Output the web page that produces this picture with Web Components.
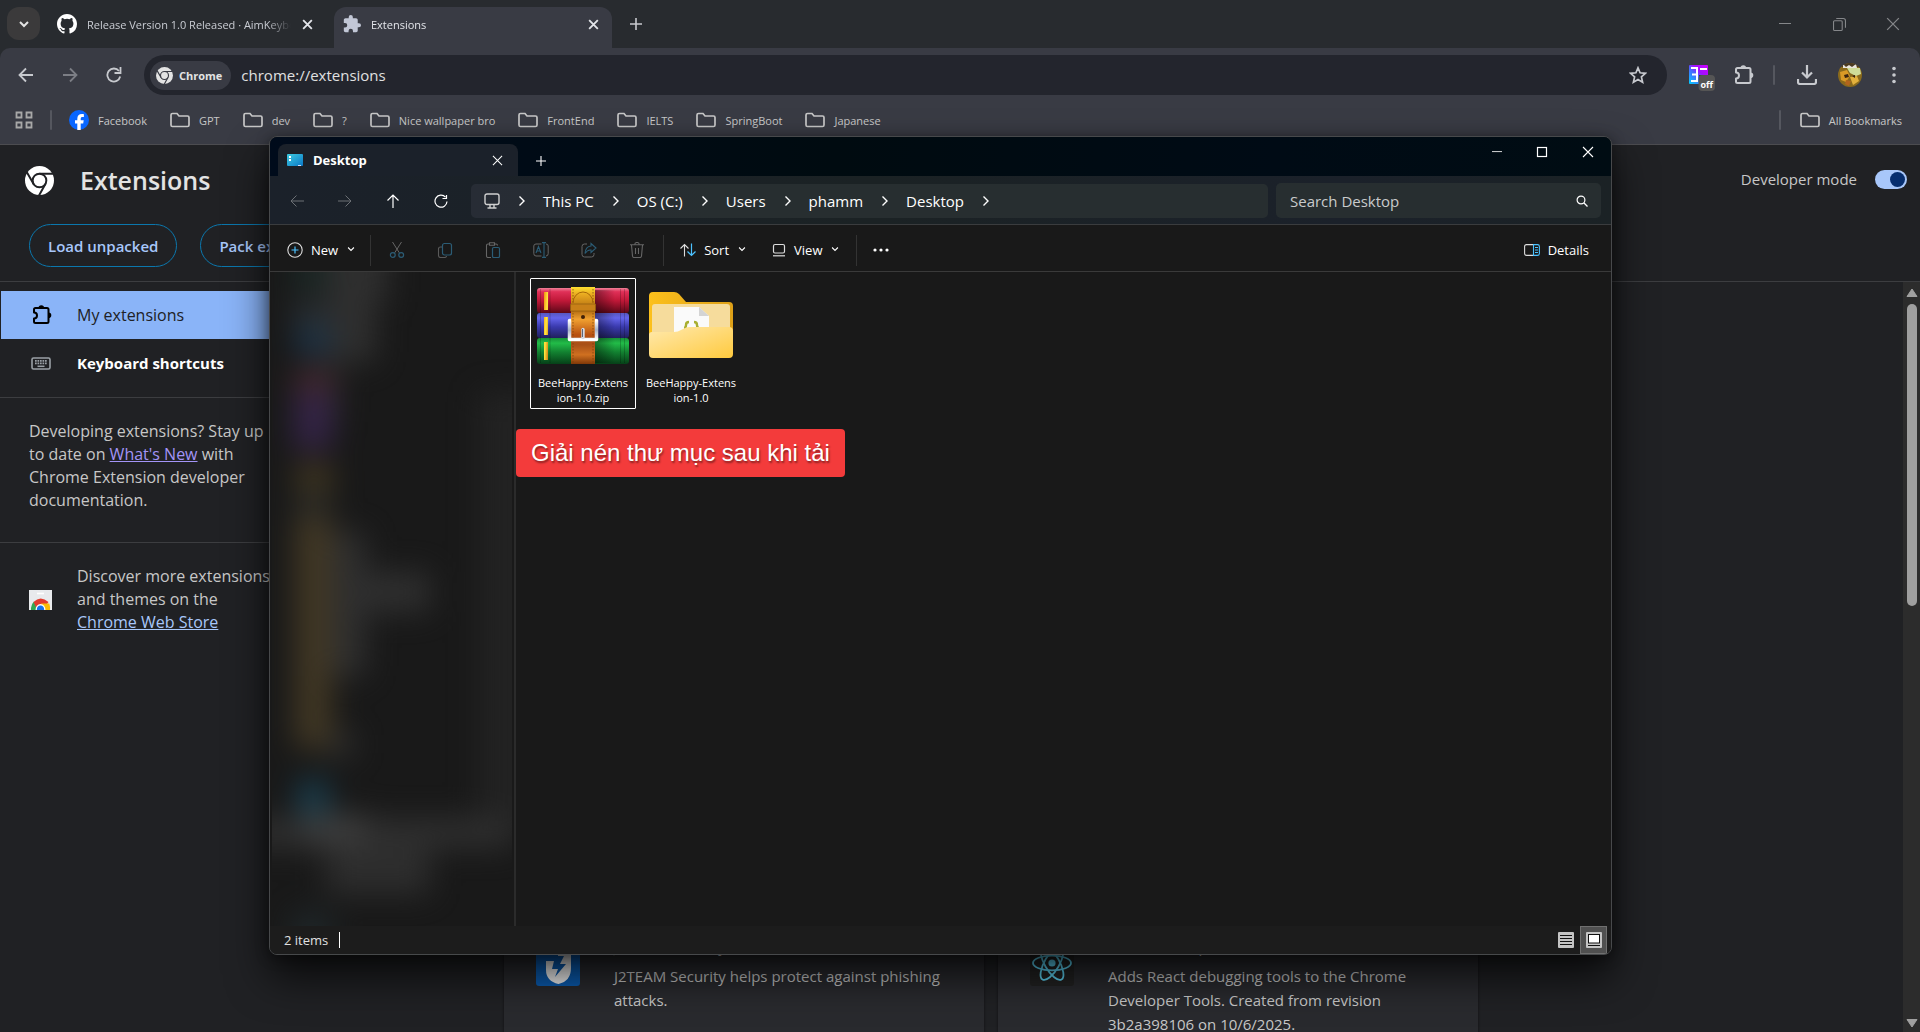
<!DOCTYPE html>
<html lang="en">
<head>
<meta charset="utf-8">
<title>Extensions</title>
<style>
html, body { margin: 0; height: 100%; overflow: hidden; background: #202124; }
body { font-family: "Open Sans", "Noto Sans", sans-serif; font-size: 15px; color: #c7c7c7; }
</style>
</head>
<body>
<desktop-screen></desktop-screen>

<script>
const ICONS = {
  chev: ['0 0 12 12', '<path d="M2 4l4 4 4-4" fill="none" stroke="currentColor" stroke-width="2"/>'],
  chevThin: ['0 0 12 12', '<path d="M2.500 3L6 6.500l3.500-3.500" fill="none" stroke="currentColor" stroke-width="1.300"/>'],
  chevRight: ['0 0 12 12', '<path d="M3.500 1.500L8 6l-4.500 4.500" fill="none" stroke="currentColor" stroke-width="1.400"/>'],
  github: ['0 0 16 16', '<path fill="#fff" d="M8 0C3.580 0 0 3.580 0 8c0 3.540 2.290 6.530 5.470 7.590.4.070.550-.170.550-.380 0-.190-.010-.820-.010-1.490-2.010.370-2.530-.490-2.690-.940-.090-.230-.480-.940-.820-1.130-.280-.150-.680-.520-.010-.530.630-.010 1.080.580 1.230.820.720 1.210 1.870.870 2.330.660.070-.520.280-.870.510-1.070-1.780-.2-3.640-.890-3.640-3.950 0-.870.310-1.590.820-2.150-.080-.2-.360-1.020.080-2.120 0 0 .670-.210 2.200.820a7.600 7.600 0 014 0c1.530-1.040 2.200-.820 2.200-.820.440 1.100.160 1.920.080 2.120.510.560.820 1.270.820 2.150 0 3.070-1.870 3.750-3.650 3.950.290.250.540.730.540 1.480 0 1.070-.010 1.930-.010 2.200 0 .210.150.460.550.380A8.010 8.010 0 0016 8c0-4.420-3.580-8-8-8z"/>'],
  puzzleFill: ['1 1 22 22', '<path fill="currentColor" d="M20.500 11H19V7c0-1.100-.9-2-2-2h-4V3.500a2.500 2.500 0 00-5 0V5H4c-1.100 0-2 .9-2 2v3.800h1.500a2.700 2.700 0 010 5.400H2V20c0 1.100.9 2 2 2h3.800v-1.500a2.700 2.700 0 015.400 0V22H17c1.100 0 2-.9 2-2v-4h1.500a2.500 2.500 0 000-5z"/>'],
  puzzle: ['0 0 22 22', '<path d="M3 5.500Q3 4 4.500 4H16Q17.500 4 17.500 5.500V17.500Q17.500 19 16 19H4.500Q3 19 3 17.500V14.500A3 3 0 003 8.500Z" fill="none" stroke="currentColor" stroke-width="2" stroke-linejoin="round"/><path d="M7.500 4a2.800 2.800 0 015.600 0zM17.500 8.500a2.800 2.800 0 010 5.600z" fill="currentColor"/>'],
  close: ['0 0 12 12', '<path d="M2 2l8 8M10 2l-8 8" stroke="currentColor" stroke-width="1.700"/>'],
  closeThin: ['0 0 12 12', '<path d="M1 1l10 10M11 1L1 11" stroke="currentColor" stroke-width="1.100"/>'],
  plus: ['0 0 12 12', '<path d="M6 0v12M0 6h12" stroke="currentColor" stroke-width="1.600"/>'],
  plusThin: ['0 0 12 12', '<path d="M6 1v10M1 6h10" stroke="currentColor" stroke-width="1.100"/>'],
  min: ['0 0 12 12', '<path d="M0 5.500h12" stroke="currentColor"/>'],
  max: ['0 0 12 12', '<rect x="1.500" y="1.500" width="9" height="9" fill="none" stroke="currentColor" stroke-width="1.200"/>'],
  restore: ['0 0 12 12', '<path d="M.5 3.500a1 1 0 011-1h6a1 1 0 011 1v7a1 1 0 01-1 1h-6a1 1 0 01-1-1zM3 .5h6.500a2 2 0 012 2V9" fill="none" stroke="currentColor"/>'],
  back: ['0 0 16 16', '<path d="M15 8H2M8 1.500L1.500 8 8 14.500" fill="none" stroke="currentColor" stroke-width="1.800"/>'],
  fwd: ['0 0 16 16', '<path d="M1 8h13M8 1.500L14.500 8 8 14.500" fill="none" stroke="currentColor" stroke-width="1.800"/>'],
  reload: ['0 0 16 16', '<path d="M14.200 9.500A6.500 6.500 0 1113 4" fill="none" stroke="currentColor" stroke-width="1.800"/><path d="M14.500 0v6h-6" fill="none" stroke="currentColor" stroke-width="1.800"/>'],
  backThin: ['0 0 14 14', '<path d="M14 7H1M6.500 1.500L1 7l5.500 5.500" fill="none" stroke="currentColor"/>'],
  fwdThin: ['0 0 14 14', '<path d="M0 7h13M7.500 1.500L13 7l-5.500 5.500" fill="none" stroke="currentColor"/>'],
  upThin: ['0 0 14 14', '<path d="M7 14V1M1.500 6.500L7 1l5.500 5.500" fill="none" stroke="currentColor" stroke-width="1.200"/>'],
  reloadThin: ['0 0 14 14', '<path d="M13 7.500A6 6 0 1111.500 3.200M12.500 1v3.500H8.500" fill="none" stroke="currentColor" stroke-width="1.200"/>'],
  chrome: ['0 0 28 28', '<circle cx="14" cy="14" r="14" fill="currentColor"/><g fill="none" stroke="var(--hole,#202124)" stroke-width="1.900"><circle cx="14" cy="14" r="6.600"/><path d="M14 7.400H27M19.700 17.300L13.500 28.500M8.300 17.300L1.800 6"/></g>'],
  star: ['0 0 18 18', '<path d="M9 1.800l2.100 5 5.400.5-4.100 3.600 1.200 5.300L9 13.400l-4.600 2.800 1.200-5.300-4.100-3.600 5.400-.5z" fill="none" stroke="currentColor" stroke-width="1.700"/>'],
  download: ['0 0 20 20', '<path d="M10 0v12M5 7.500l5 5 5-5M1 14v3q0 2 2 2h14q2 0 2-2v-3" fill="none" stroke="currentColor" stroke-width="2.200"/>'],
  dots: ['0 0 6 18', '<g fill="currentColor"><circle cx="3" cy="2.500" r="1.800"/><circle cx="3" cy="9" r="1.800"/><circle cx="3" cy="15.500" r="1.800"/></g>'],
  apps: ['0 0 18 18', '<g fill="none" stroke="currentColor" stroke-width="1.800"><path d="M1.500 1.500h5v5h-5zM11.500 1.500h5v5h-5zM1.500 11.500h5v5h-5zM11.500 11.500h5v5h-5z"/></g>'],
  folder: ['0 0 20 16', '<path d="M1 3q0-1.500 1.500-1.500H7L9 4h8.500Q19 4 19 5.500v7.500q0 1.500-1.500 1.500h-15Q1 14.500 1 13z" fill="none" stroke="currentColor" stroke-width="1.700"/>'],
  facebook: ['0 0 20 20', '<circle cx="10" cy="10" r="10" fill="#0866ff"/><path d="M8.300 20v-6.600H6V10.300h2.300V9c0-3.300 1.500-4.900 4.700-4.900.6 0 1.500.1 1.900.2v2.800h-1.300c-1.400 0-1.900.6-1.900 2v1.200h3l-.5 3.100h-2.500V20z" fill="#fff"/>'],
  flow: ['0 0 26 27', '<defs><linearGradient id="g" x1="0" y1="1" x2="1" y2="0"><stop offset="0" stop-color="#00d0ff"/><stop offset=".45" stop-color="#4f62ff"/><stop offset=".6" stop-color="#a010ff"/><stop offset="1" stop-color="#d000ff"/></linearGradient></defs><path d="M0 1q0-1 1-1h17q1 0 1 1v9h-9v9H1q-1 0-1-1z" fill="url(#g)"/><path d="M2 3h6v13H2M3 9.500h5M11 4h7" stroke="#fff" stroke-width="2" fill="none"/><rect x="9.500" y="10" width="16.500" height="16" rx="4" fill="#555"/>'],
  avatar: ['0 0 24 24', '<defs><clipPath id="c"><circle cx="12" cy="12" r="12"/></clipPath></defs><g clip-path="url(#c)"><path fill="#8a6a1c" d="M0 0h24v24H0z"/><path fill="#4a3a22" d="M3 0h18v4H3z"/><path fill="#e8e4dc" d="M5 1l3 3 3-2 3 2 4-3 1 4H5z"/><path fill="#cfdc98" d="M9 5h13l1 6-5 2-6-3z"/><path fill="#d99a26" d="M2 9l7-2 3 6-4 6-5-2z"/><path fill="#e2b03c" d="M12 14l7-1 2 5-6 4z"/><path fill="#3a2410" d="M6 12l4-1 1 3-4 1zM14 13l3-1v3z"/><path fill="#b3641c" d="M8 17l5 1-2 5-4-2z"/></g>'],
  keyboard: ['0 0 20 13', '<rect x="1" y="1" width="18" height="11" rx="1.500" fill="none" stroke="#9aa0a6" stroke-width="1.600"/><path d="M4 3.800h12M4 6.300h12" stroke="#9aa0a6" stroke-width="1.700" stroke-dasharray="1.700 .8"/><path d="M6.500 9.300h7" stroke="#9aa0a6" stroke-width="1.500"/>'],
  store: ['0 0 23 20', '<path fill="#e8eaed" d="M0 0h23v20H0z"/><path d="M8 3.500h7" stroke="#fff" stroke-width="1.600"/><path d="M2 20a9.500 11 0 013-8.500l4 8.500z" fill="#34a853"/><path d="M4.500 12q7-7 15 0l-3 4H9l-1 3z" fill="#e33b2e"/><path d="M12 13.500h8.300q1 3 .7 6.500h-6z" fill="#fbbc04"/><path d="M6.500 20a5 6 0 0110 0z" fill="#fff"/><path d="M7.800 20a3.700 4.500 0 017.400 0z" fill="#1a73e8"/>'],
  desktop: ['0 0 16 13', '<defs><linearGradient id="d" x1="0" y1="0" x2="1" y2="1"><stop offset="0" stop-color="#3ecbe0"/><stop offset="1" stop-color="#0a78c8"/></linearGradient></defs><rect width="16" height="12" rx="1" fill="url(#d)"/><path d="M2 2h2v2H2zM2 5h2v2H2z" fill="#fff"/><path d="M11 11.500h3" stroke="#cdf" stroke-width="1"/>'],
  monitor: ['0 0 16 16', '<rect x="1" y="1" width="14" height="10.500" rx="2" fill="none" stroke="currentColor" stroke-width="1.400"/><path d="M6 12v2.500M10 12v2.500M3.500 15h9" stroke="currentColor" stroke-width="1.400"/>'],
  search: ['0 0 12 12', '<circle cx="5" cy="5" r="3.900" fill="none" stroke="currentColor" stroke-width="1.200"/><path d="M7.800 7.800L11.500 11.500" stroke="currentColor" stroke-width="1.300"/>'],
  add: ['0 0 16 16', '<circle cx="8" cy="8" r="7.200" fill="none" stroke="#ddd" stroke-width="1.100"/><path d="M8 4.500v7M4.500 8h7" stroke="#4cc2ff" stroke-width="1.200"/>'],
  cut: ['0 0 16 16', '<path d="M3.500 0l6.800 10.800M12.500 0L5.700 10.800" stroke="#666" fill="none"/><g fill="none" stroke="#2b5c75" stroke-width="1.200"><circle cx="3.800" cy="13" r="2.400"/><circle cx="12.200" cy="13" r="2.400"/></g>'],
  copy: ['0 0 16 16', '<path d="M5 5H3.500Q1.500 5 1.500 7v6.500q0 2 2 2h4q2 0 2-1.500" fill="none" stroke="#5a5a5a" stroke-width="1.100"/><rect x="5.500" y="1.500" width="9" height="11.500" rx="2" fill="none" stroke="#2b5c75" stroke-width="1.200"/>'],
  paste: ['0 0 16 16', '<path d="M4.500 2H3Q1.500 2 1.500 3.500v10.500q0 1.500 1.500 1.500h3M9.500 2H11q1.500 0 1.500 1.500M4.500.8h5v2.400h-5z" fill="none" stroke="#666" stroke-width="1.100"/><rect x="7.500" y="5.500" width="7" height="10" rx="1.300" fill="none" stroke="#2b5c75" stroke-width="1.200"/>'],
  rename: ['0 0 16 16', '<path d="M8.500 2H3Q.8 2 .8 4v7.500Q.8 14 3 14h5.500M13 2q2.200 0 2.200 2v7.500q0 2.500-2.200 2.500" fill="none" stroke="#666"/><path d="M3 11l2.500-6.500L8 11M4 9h3M9 .6h4M11 .6v14.800M9 15.400h4" fill="none" stroke="#2b5c75" stroke-width="1.100"/>'],
  share: ['0 0 16 16', '<path d="M6 2H3.500Q1 2 1 4.500v8Q1 15 3.500 15h7q2.500 0 2.500-2.500V11" fill="none" stroke="#666"/><path d="M10 1.500l5 4.500-5 4.500V8Q6.500 7.500 4 11.500 4.500 4.500 10 4z" fill="none" stroke="#2b5c75" stroke-width="1.100"/>'],
  trash: ['0 0 16 16', '<path d="M1 2.800h14M5.800 2.500q0-2 2.200-2t2.200 2M2.500 3l1 11q.1 1.500 1.500 1.500h6q1.400 0 1.500-1.500l1-11M6.500 6v6M9.500 6v6" fill="none" stroke="#666" stroke-width="1.100"/>'],
  sort: ['0 0 16 14', '<path d="M4.500 13.500V1.500M.5 5.500l4-4 4 4" fill="none" stroke="#ddd" stroke-width="1.100"/><path d="M11.500.5v12M7.500 8.500l4 4 4-4" fill="none" stroke="#4cc2ff" stroke-width="1.200"/>'],
  view: ['0 0 14 14', '<rect x="1.500" y="1.500" width="11" height="8.500" rx="1.500" fill="none" stroke="#ddd" stroke-width="1.200"/><path d="M1 12.800h12" stroke="#ddd" stroke-width="1.200"/>'],
  more: ['0 0 16 4', '<g fill="#fff"><circle cx="2" cy="2" r="1.600"/><circle cx="8" cy="2" r="1.600"/><circle cx="14" cy="2" r="1.600"/></g>'],
  details: ['0 0 16 12', '<path d="M9.500.6H2.500Q.6.6.6 2.500v7q0 1.900 1.900 1.900h7" fill="none" stroke="#ddd" stroke-width="1.100"/><path d="M9.500.6h4q1.900 0 1.900 1.900v7q0 1.900-1.900 1.900h-4zM11 3.500h3M11 6h3M11 8.500h3" fill="none" stroke="#4cc2ff" stroke-width="1.100"/>'],
  list: ['0 0 16 16', '<rect width="16" height="16" rx="1" fill="#c4c4c4"/><path d="M2 3.500h12M2 6.500h12M2 9.500h12M2 12.500h12" stroke="#111"/>'],
  tiles: ['0 0 16 16', '<rect width="16" height="16" rx="1" fill="#c4c4c4"/><rect x="2.500" y="2.500" width="11" height="8.500" fill="#fff" stroke="#111"/><path d="M2 13.500h12" stroke="#111"/>'],
  shield: ['0 0 44 44', '<rect width="44" height="44" rx="3" fill="#0b5cb0"/><path d="M22 4h13v22q0 13-12.500 16Q10 39 10 28V19h8l-2 8h6l-3 8 11-13h-6l4-8h-6z" fill="#f2f2f2"/>'],
  react: ['0 0 44 44', '<rect width="44" height="44" rx="3" fill="#222"/><g fill="none" stroke="#61dafb" stroke-width="1.800"><ellipse cx="22" cy="21" rx="19" ry="7.400"/><ellipse cx="22" cy="21" rx="19" ry="7.400" transform="rotate(60 22 21)"/><ellipse cx="22" cy="21" rx="19" ry="7.400" transform="rotate(120 22 21)"/></g><circle cx="22" cy="21" r="3.600" fill="#61dafb"/>'],
  up: ['0 0 12 10', '<path d="M6 1L11 8.500H1z" fill="#a0a0a0" stroke="#a0a0a0" stroke-linejoin="round"/>'],
  down: ['0 0 12 10', '<path d="M6 9L1 1.500h10z" fill="#a0a0a0" stroke="#a0a0a0" stroke-linejoin="round"/>'],
  winrar: ['0 0 92 80', `<defs>
    <linearGradient id="r" x2="0" y2="1"><stop offset="0" stop-color="#f08098"/><stop offset=".15" stop-color="#e03058"/><stop offset=".5" stop-color="#c01838"/><stop offset="1" stop-color="#5c0818"/></linearGradient>
    <linearGradient id="b" x2="0" y2="1"><stop offset="0" stop-color="#5858c0"/><stop offset=".2" stop-color="#6464ec"/><stop offset=".55" stop-color="#3a3aae"/><stop offset="1" stop-color="#20205c"/></linearGradient>
    <linearGradient id="n" x2="0" y2="1"><stop offset="0" stop-color="#189038"/><stop offset=".2" stop-color="#22bc48"/><stop offset=".55" stop-color="#128030"/><stop offset="1" stop-color="#064018"/></linearGradient>
    <linearGradient id="s" x2="0" y2="1"><stop offset="0" stop-color="#ffe030"/><stop offset=".1" stop-color="#e8a820"/><stop offset=".3" stop-color="#b06a10"/><stop offset=".42" stop-color="#f0a030"/><stop offset=".62" stop-color="#b85010"/><stop offset=".75" stop-color="#a85018"/><stop offset=".88" stop-color="#d07020"/><stop offset="1" stop-color="#803808"/></linearGradient>
    <linearGradient id="y" x2="1" y2="1"><stop offset="0" stop-color="#f09010"/><stop offset=".5" stop-color="#ffe840"/><stop offset="1" stop-color="#d07810"/></linearGradient>
    <linearGradient id="h"><stop offset="0" stop-color="#000" stop-opacity=".4"/><stop offset="1" stop-color="#000" stop-opacity="0"/></linearGradient>
    <linearGradient id="m" x2="0" y2="1"><stop offset="0" stop-color="#fff"/><stop offset=".5" stop-color="#a8b4c8"/><stop offset="1" stop-color="#fff"/></linearGradient></defs>
    <rect y="2" width="92" height="25" rx="3" fill="url(#r)"/><rect y="27" width="92" height="25" rx="3" fill="url(#b)"/><rect y="52" width="92" height="26" rx="3" fill="url(#n)"/>
    <path d="M3.500 3v74M13 3v74M83.500 3v74M87.500 3v74" stroke="#000" stroke-opacity=".2"/><path d="M58 4h20v73H58z" fill="url(#h)"/>
    <path d="M7 6h4v18H7zM7 31h4v18H7zM7 56h4v18H7z" fill="url(#y)"/>
    <path d="M34 1h24v77H34z" fill="url(#s)"/><path d="M36 3v74M56 3v74" stroke="#704008" stroke-dasharray="1.500 1.500" fill="none" opacity=".7"/>
    <path d="M36 17a10 11 0 0120 0" fill="none" stroke="#a86808"/><path d="M33.500 18h25v7h-25z" fill="#c88018" stroke="#946010" stroke-width=".8"/><circle cx="46" cy="31" r="2" fill="#402008"/>
    <path d="M34 34.500h-1.500v19h27V34.500H58" fill="none" stroke="url(#m)" stroke-width="3.500" stroke-linejoin="round"/><path d="M46 43.500v8" stroke="#d4dae4" stroke-width="3.400" stroke-linecap="round"/><path d="M45.500 43v8" stroke="#50586a" stroke-width=".9"/>`],
  projectFolder: ['0 0 92 80', `<defs>
    <linearGradient id="f" x2="1" y2="1"><stop offset="0" stop-color="#ffe9ae"/><stop offset="1" stop-color="#ffca3e"/></linearGradient>
    <linearGradient id="k" x2="1"><stop offset="0" stop-color="#fcc01c"/><stop offset="1" stop-color="#dda018"/></linearGradient></defs>
    <path d="M4 10q0-4 4-4h21q3 0 5 2l7 8h43q4 0 4 4v48H4z" fill="url(#k)"/><path d="M7 21q0-3 3-3h72q3 0 3 3v28H7z" fill="#f6dc9c"/>
    <path d="M29 21h25l10 9v22H29z" fill="#fafafa"/><path d="M54 21v9h10z" fill="#d4d4d4"/>
    <path d="M44 36q-3 0-3 3t-2 3q2 0 2 3M49 36q3 0 3 3t2 3q-2 0-2 3" fill="none" stroke="#a8ae30" stroke-width="2.400"/>
    <path d="M4 49q0-3 3-3h22q4 0 7-2l4-2q2-1 5-1h39q4 0 4 4v23q0 4-4 4H8q-4 0-4-4z" fill="url(#f)"/>`]
};

/* Registers an element whose shadow root is cloned from a template. */
function define(name, css, html) {
  const template = document.createElement('template');
  template.innerHTML = `<style>*{box-sizing:border-box}button,input{font:inherit;color:inherit;background:none;border:0;padding:0;margin:0;outline:0}button{display:inline-flex;align-items:center;justify-content:center;white-space:nowrap}a{color:inherit;text-decoration:none}${css}</style>${html}`;
  customElements.define(name, class extends HTMLElement {
    constructor() {
      super();
      this.attachShadow({ mode: 'open' }).append(template.content.cloneNode(true));
    }
  });
}

customElements.define('ui-icon', class extends HTMLElement {
  connectedCallback() {
    if (this.shadowRoot) return;
    const [box, body] = ICONS[this.getAttribute('name')];
    const [, , w, h] = box.split(' ').map(Number);
    const width = Number(this.getAttribute('w') || w);
    const height = Math.round(width * h / w);
    this.attachShadow({ mode: 'open' }).innerHTML =
      `<style>:host{display:inline-flex;flex:none}svg{display:block}</style><svg aria-hidden="true" width="${width}" height="${height}" viewBox="${box}">${body}</svg>`;
  }
});

define('browser-tab', `
  :host { display: flex; align-items: center; width: 278px; height: 41px; padding: 0 13px 7px 9px; gap: 10px; font-size: 11px; color: #c9ccd3; }
  :host([active]) { background: #393b44; border-radius: 12px 12px 0 0; color: #e3e5ea; }
  .title { flex: 1; min-width: 0; overflow: hidden; white-space: nowrap; -webkit-mask-image: linear-gradient(90deg, #000 calc(100% - 24px), transparent); text-align: left; }
  button { width: 12px; height: 20px; color: #e3e5ea; }
`, `<slot name="icon"></slot><span class="title"><slot></slot></span><button aria-label="Close tab"><ui-icon name="close" w="13"></ui-icon></button>`);

define('bookmark-link', `
  :host { display: block; font-size: 11px; color: #c7c7c7; }
  a { display: flex; align-items: center; gap: 9px; white-space: nowrap; }
`, `<a href="#"><slot name="icon"><ui-icon name="folder"></ui-icon></slot><slot></slot></a>`);

define('bar-rule', `:host { display: block; width: 2px; height: 20px; background: #55575f; border-radius: 1px; }`, ``);

define('browser-chrome', `
  :host { display: block; background: #282b2f; }
  .tabs { display: flex; height: 48px; padding: 7px 0 0 7px; }
  .tabs browser-tab[active] { margin-left: 8px; }
  .menu { width: 33px; height: 33px; border-radius: 12px; background: #3b3a3b; color: #e3e3e3; margin-right: 8px; }
  .new { width: 48px; height: 34px; color: #c7c9ce; }
  .win { margin-left: auto; display: flex; color: #85878a; }
  .win button { width: 54px; height: 34px; }
  .panel { background: #393b44; border-radius: 10px 10px 0 0; border-bottom: 1px solid #4c4c50; height: 97px; padding-top: 7px; }
  .bar { display: flex; align-items: center; height: 40px; color: #c7c9ce; padding-right: 23px; }
  .nav { display: flex; padding-left: 4px; width: 144px; }
  .nav button { width: 44px; height: 40px; }
  .dim { color: #7c7e85; }
  .omni { flex: 1; display: flex; align-items: center; height: 40px; border-radius: 20px; background: #23252d; padding: 0 20px 0 6px; }
  .chip { height: 29px; border-radius: 15px; background: #393b44; padding: 0 9px 0 6px; gap: 6px; font-size: 11px; font-weight: 700; color: #e3e3e3; --hole: #393b44; }
  .omni input { flex: 1; font-size: 15px; color: #e0e0e0; padding-left: 10px; height: 30px; }
  .tools { display: flex; align-items: center; padding-left: 22px; }
  .flow { display: grid; margin-right: 18px; padding-top: 6px; }
  .flow > * { grid-area: 1 / 1; }
  .flow span { align-self: end; justify-self: end; font: 700 9px/14px "Open Sans", sans-serif; color: #fff; padding-right: 2px; }
  .marks { display: flex; align-items: center; height: 50px; padding: 0 18px 0 15px; gap: 23px; }
  .marks bar-rule { margin: 0 -6px; }
  .all { margin-left: auto; display: flex; align-items: center; gap: 19px; }
`, `
  <div class="tabs">
    <button class="menu" aria-label="Search tabs"><ui-icon name="chev"></ui-icon></button>
    <browser-tab><ui-icon slot="icon" name="github" w="20"></ui-icon>Release Version 1.0 Released · AimKeyboard</browser-tab>
    <browser-tab active><ui-icon slot="icon" name="puzzleFill" w="18" style="color:#c2c7d6"></ui-icon>Extensions</browser-tab>
    <button class="new" aria-label="New tab"><ui-icon name="plus"></ui-icon></button>
    <div class="win"><button aria-label="Minimize"><ui-icon name="min"></ui-icon></button><button aria-label="Restore"><ui-icon name="restore" w="13"></ui-icon></button><button aria-label="Close"><ui-icon name="closeThin" w="14"></ui-icon></button></div>
  </div>
  <div class="panel">
    <div class="bar">
      <div class="nav"><button aria-label="Back"><ui-icon name="back"></ui-icon></button><button class="dim" aria-label="Forward"><ui-icon name="fwd"></ui-icon></button><button aria-label="Reload"><ui-icon name="reload"></ui-icon></button></div>
      <div class="omni"><button class="chip"><ui-icon name="chrome" w="17"></ui-icon>Chrome</button><input aria-label="Address" value="chrome://extensions"><button aria-label="Bookmark"><ui-icon name="star"></ui-icon></button></div>
      <div class="tools">
        <button class="flow" aria-label="Extension, off"><ui-icon name="flow"></ui-icon><span>off</span></button>
        <button aria-label="Extensions"><ui-icon name="puzzle"></ui-icon></button>
        <bar-rule style="margin:0 22px 0 18px"></bar-rule>
        <button aria-label="Downloads"><ui-icon name="download"></ui-icon></button>
        <button aria-label="Profile" style="margin:0 29px 0 21px"><ui-icon name="avatar"></ui-icon></button>
        <button aria-label="Menu"><ui-icon name="dots"></ui-icon></button>
      </div>
    </div>
    <div class="marks">
      <ui-icon name="apps" style="color:#a8a8a8"></ui-icon><bar-rule></bar-rule>
      <bookmark-link><ui-icon slot="icon" name="facebook"></ui-icon>Facebook</bookmark-link>
      <bookmark-link>GPT</bookmark-link><bookmark-link>dev</bookmark-link><bookmark-link>?</bookmark-link><bookmark-link>Nice wallpaper bro</bookmark-link><bookmark-link>FrontEnd</bookmark-link><bookmark-link>IELTS</bookmark-link><bookmark-link>SpringBoot</bookmark-link><bookmark-link>Japanese</bookmark-link>
      <div class="all"><bar-rule style="margin:0"></bar-rule><bookmark-link>All Bookmarks</bookmark-link></div>
    </div>
  </div>`);

define('side-item', `
  :host { display: block; height: 48px; font-size: 15px; font-weight: 700; color: #fff; margin-left: 1px; }
  :host([active]) { background: #8ab4f8; color: #202124; font-size: 16px; font-weight: 400; }
  a { display: flex; height: 100%; align-items: center; padding-left: 28px; }
  .i { width: 48px; display: flex; padding-left: 2px; color: #000; }
`, `<a href="#"><span class="i"><slot name="icon"></slot></span><slot></slot></a>`);

define('extension-card', `
  :host { display: flex; gap: 34px; width: 480px; height: 200px; background: #292a2e; border-radius: 8px; padding: 13px 32px; color: #c7c7c7; line-height: 24px; box-shadow: 0 1px 3px #0008; }
  h2 { margin: 0 0 6px; font-size: 15px; line-height: 24px; font-weight: 400; color: #e3e3e3; white-space: nowrap; }
  p { margin: 0; width: 330px; font-size: 15px; }
  .i { padding-top: 8px; }
`, `<div class="i"><slot name="icon"></slot></div><div><h2><slot name="title"></slot></h2><p><slot></slot></p></div>`);

define('extensions-page', `
  :host { flex: 1; min-height: 0; display: flex; flex-direction: column; background: #202124; }
  header { height: 137px; border-bottom: 1px solid #3c3d40; padding: 20px 13px 0 25px; }
  .top { display: flex; align-items: center; height: 30px; color: #fff; }
  h1 { font-size: 25px; line-height: 30px; font-weight: 600; margin: 0 0 0 26px; color: #e3e3e3; }
  label { margin-left: auto; display: flex; align-items: center; gap: 18px; color: #c7c7c7; font-size: 15px; padding-bottom: 2px; }
  input { appearance: none; display: flex; align-items: center; justify-content: flex-end; width: 32px; height: 19px; border-radius: 10px; background: #a8c7fa; padding-right: 2px; }
  input::before { content: ""; width: 15px; height: 15px; border-radius: 50%; background: #062e6f; }
  .acts { display: flex; gap: 23px; padding: 29px 0 0 4px; }
  .acts button { height: 43px; border-radius: 22px; border: 1px solid #0b77ad; color: #a8c7fa; font-weight: 600; padding: 0 18px; }
  .body { flex: 1; min-height: 0; display: flex; }
  aside { width: 300px; padding-top: 9px; font-size: 16px; line-height: 23px; }
  .sec { border-top: 1px solid #3c3d40; }
  .dev { margin-top: 10px; padding: 22px 26px 30px 29px; }
  .dev a { color: #a394f7; text-decoration: underline; }
  .disc { display: flex; align-items: center; padding: 22px 20px 0 29px; gap: 25px; }
  .disc a { display: inline-block; white-space: nowrap; color: #a8c7fa; text-decoration: underline; }
  main { flex: 1; min-width: 0; display: flex; align-items: flex-end; justify-content: center; gap: 14px; margin-bottom: -89px; padding-right: 221px; }
  .scroll { width: 17px; background: #2c2c2c; display: flex; flex-direction: column; align-items: center; padding: 6px 0 4px; gap: 6px; }
  .scroll i { width: 10px; flex: 0 0 302px; border-radius: 5px; background: #9f9f9f; }
  .scroll ui-icon:last-child { margin-top: auto; }
  .clip { flex: 1; display: flex; overflow: hidden; }
`, `
  <header>
    <div class="top"><ui-icon name="chrome" w="29"></ui-icon><h1>Extensions</h1><label for="dev">Developer mode <input id="dev" type="checkbox" checked></label></div>
    <div class="acts"><button>Load unpacked</button><button>Pack extension</button></div>
  </header>
  <div class="body">
    <aside>
      <side-item active><ui-icon slot="icon" name="puzzle"></ui-icon>My extensions</side-item>
      <side-item><ui-icon slot="icon" name="keyboard"></ui-icon>Keyboard shortcuts</side-item>
      <div class="sec dev">Developing extensions? Stay up to date on <a href="#">What's New</a> with Chrome Extension developer documentation.</div>
      <div class="sec disc"><ui-icon name="store"></ui-icon><span>Discover more extensions and themes on the <a href="#">Chrome Web Store</a></span></div>
    </aside>
    <div class="clip"><main>
      <extension-card><ui-icon slot="icon" name="shield"></ui-icon><span slot="title">J2TEAM Security</span>J2TEAM Security helps protect against phishing attacks.</extension-card>
      <extension-card><ui-icon slot="icon" name="react"></ui-icon><span slot="title">React Developer Tools 7.0.1 (10/20/2025)</span>Adds React debugging tools to the Chrome Developer Tools. Created from revision 3b2a398106 on 10/6/2025.</extension-card>
    </main></div>
    <div class="scroll"><ui-icon name="up"></ui-icon><i></i><ui-icon name="down"></ui-icon></div>
  </div>`);

define('file-tile', `
  :host { display: block; width: 106px; }
  button { width: 100%; height: 131px; flex-direction: column; justify-content: flex-start; gap: 9px; padding: 7px 0 0; border: 1px solid transparent; border-radius: 1px; color: #fff; }
  :host([selected]) button { border-color: #fff; }
  span { font-size: 11px; line-height: 15px; text-align: center; }
`, `<button><slot name="icon"></slot><span><slot></slot></span></button>`);

define('blurred-tree', `
  :host { display: block; overflow: hidden; background: #191919; }
  svg { display: block; width: 100%; height: 100%; }
`, `<svg viewBox="0 0 240 654" preserveAspectRatio="xMinYMin slice" aria-hidden="true">
    <defs><filter id="s" filterUnits="userSpaceOnUse" x="-80" y="-80" width="420" height="820" color-interpolation-filters="sRGB"><feGaussianBlur stdDeviation="15"/></filter></defs>
    <rect width="240" height="654" fill="#191919"/>
    <g filter="url(#s)" opacity=".85">
      <path fill="#333" d="M56-60h60v90H104v60H66v60H56zM56 260h38v40h64v40H94v64H56zM56 460h26v24H56z"/>
      <path fill="#242424" d="M206 120h90v440h-90z"/>
      <path fill="#1b2b28" d="M20-20h36v36H20z"/><path fill="#2b3033" d="M20 26h38v28H20z"/><path fill="#1d3850" d="M24 54h34v30H24z"/>
      <path fill="#4c2a2c" d="M22 96h38v22H22z"/><path fill="#3a2650" d="M22 118h38v60H22z"/><path fill="#4a3d20" d="M24 192h36v26H24z"/>
      <path fill="#2a2a28" d="M24 218h36v28H24z"/><path fill="#4a3e26" d="M23 244h36v232H23z"/><path fill="#18465a" d="M26 508h30v34H26z"/>
      <path fill="#333" d="M-60 546h300v30H-60z"/><path fill="#444" d="M30 542h64v30H30z"/><path fill="#313131" d="M54 574h104v48H54z"/><path fill="#20292c" d="M20 640h40v60H20z"/>
    </g></svg>`);

define('file-explorer', `
  :host { display: flex; flex-direction: column; border: 1px solid #47494b; border-radius: 8px; overflow: hidden; background: #191919; color: #fff; box-shadow: 0 22px 42px rgba(0,0,0,.7), 0 2px 14px rgba(0,0,0,.4); }
  .title { display: flex; height: 39px; background: linear-gradient(90deg, #000b1b, #000b10 42%, #000b15 75%, #000c13); padding-left: 8px; }
  .tab { display: flex; align-items: center; align-self: flex-end; width: 240px; height: 32px; background: #1b212a; border-radius: 8px 8px 0 0; padding: 0 15px 0 9px; gap: 10px; font-size: 13px; font-weight: 700; }
  .tab span { flex: 1; }
  .plus { width: 46px; padding-top: 8px; }
  .win { margin-left: auto; display: flex; }
  .win button { width: 46px; height: 30px; }
  .win button:first-child { width: 44px; }
  .addr { display: flex; align-items: center; height: 49px; background: linear-gradient(90deg, #1b212a, #1b2224 45%, #1b212a 80%, #1b2225); padding: 1px 10px 0 3px; border-bottom: 1px solid #3a3c3e; }
  .addr > button { width: 48px; height: 34px; }
  .dim { color: #6c7075; }
  .path { flex: 1; height: 34px; display: flex; align-items: center; margin-left: 6px; padding-left: 13px; border-radius: 5px; background: linear-gradient(90deg, #272c35, #272e30 30%); }
  .path button { font-size: 15px; }
  .path ui-icon[name="chevRight"] { margin: 0 15px 0 16px; }
  .find { width: 325px; height: 35px; display: flex; align-items: center; margin-left: 8px; padding: 0 13px 0 14px; border-radius: 5px; background: #272e30; }
  .find input { flex: 1; min-width: 0; }
  .find input::placeholder { color: #c9cbcc; opacity: 1; }
  .cmds { display: flex; align-items: center; height: 47px; border-bottom: 1px solid #3a3a3a; font-size: 13px; padding: 4px 22px 0 17px; }
  .cmds button { gap: 8px; }
  .cmds .set { display: flex; gap: 32px; }
  hr { width: 1px; height: 31px; border: 0; background: #333; margin: 0 14px; }
  .edit { padding: 0 4px; }
  .views { padding: 0 2px; }
  .more { margin-left: 2px; }
  .det { margin-left: auto; }
  .body { flex: 1; min-height: 0; display: flex; }
  blurred-tree { width: 240px; margin: 0 1px 0 2px; }
  .split { width: 3px; border-right: 2px solid #2b2b2b; }
  .files { flex: 1; }
  .row { display: flex; gap: 2px; padding: 6px 0 0 14px; }
  .note { display: inline-block; margin-top: 20px; background: #f33b3b; border-radius: 4px; padding: 0 15px; font: 24px/48px "Liberation Sans", Arial, sans-serif; text-shadow: 1px 2px 2px rgba(0,0,0,.45); }
  footer { display: flex; align-items: center; height: 28px; background: #1c1c1c; font-size: 13px; color: #e0e0e0; padding: 0 4px 0 14px; }
  footer i { width: 1px; height: 16px; background: #fff; margin-left: 11px; }
  footer div { margin-left: auto; display: flex; }
  footer button { width: 27px; height: 28px; }
  footer .on { background: #505050; border: 1px solid #707070; margin-left: 1px; }
`, `
  <div class="title">
    <div class="tab"><ui-icon name="desktop"></ui-icon><span>Desktop</span><button aria-label="Close tab"><ui-icon name="closeThin" w="11"></ui-icon></button></div>
    <button class="plus" aria-label="New tab"><ui-icon name="plusThin"></ui-icon></button>
    <div class="win"><button aria-label="Minimize"><ui-icon name="min" w="10"></ui-icon></button><button aria-label="Maximize"><ui-icon name="max"></ui-icon></button><button aria-label="Close"><ui-icon name="closeThin"></ui-icon></button></div>
  </div>
  <div class="addr">
    <button class="dim" aria-label="Back"><ui-icon name="backThin"></ui-icon></button><button class="dim" aria-label="Forward"><ui-icon name="fwdThin"></ui-icon></button><button aria-label="Up"><ui-icon name="upThin"></ui-icon></button><button aria-label="Refresh"><ui-icon name="reloadThin"></ui-icon></button>
    <nav class="path"><ui-icon name="monitor" style="color:#d0d0d0"></ui-icon><ui-icon name="chevRight"></ui-icon><button>This PC</button><ui-icon name="chevRight"></ui-icon><button>OS (C:)</button><ui-icon name="chevRight"></ui-icon><button>Users</button><ui-icon name="chevRight"></ui-icon><button>phamm</button><ui-icon name="chevRight"></ui-icon><button>Desktop</button><ui-icon name="chevRight"></ui-icon></nav>
    <div class="find"><input type="search" aria-label="Search Desktop" placeholder="Search Desktop"><ui-icon name="search"></ui-icon></div>
  </div>
  <div class="cmds">
    <button><ui-icon name="add"></ui-icon>New<ui-icon name="chevThin" w="10"></ui-icon></button><hr>
    <div class="set edit">
      <button aria-label="Cut"><ui-icon name="cut"></ui-icon></button><button aria-label="Copy"><ui-icon name="copy"></ui-icon></button><button aria-label="Paste"><ui-icon name="paste"></ui-icon></button><button aria-label="Rename"><ui-icon name="rename"></ui-icon></button><button aria-label="Share"><ui-icon name="share"></ui-icon></button><button aria-label="Delete"><ui-icon name="trash"></ui-icon></button>
    </div><hr>
    <div class="set views" style="gap:25px"><button><ui-icon name="sort"></ui-icon>Sort<ui-icon name="chevThin" w="10"></ui-icon></button><button><ui-icon name="view"></ui-icon>View<ui-icon name="chevThin" w="10"></ui-icon></button></div><hr>
    <button class="more" aria-label="See more"><ui-icon name="more"></ui-icon></button>
    <button class="det"><ui-icon name="details"></ui-icon><span>Details</span></button>
  </div>
  <div class="body">
    <blurred-tree></blurred-tree><div class="split"></div>
    <div class="files">
      <div class="row">
        <file-tile selected><ui-icon slot="icon" name="winrar"></ui-icon>BeeHappy-Extens<br>ion-1.0.zip</file-tile>
        <file-tile><ui-icon slot="icon" name="projectFolder"></ui-icon>BeeHappy-Extens<br>ion-1.0</file-tile>
      </div>
      <div class="note" lang="vi">Giải nén thư mục sau khi tải</div>
    </div>
  </div>
  <footer>2 items<i></i><div><button aria-label="Details view"><ui-icon name="list"></ui-icon></button><button class="on" aria-label="Large icons"><ui-icon name="tiles"></ui-icon></button></div></footer>`);

define('desktop-screen', `
  :host { display: flex; flex-direction: column; height: 100vh; position: relative; }
  file-explorer { position: absolute; top: 136px; left: 269px; right: 308px; bottom: 77px; }
`, `<browser-chrome></browser-chrome><extensions-page></extensions-page><file-explorer></file-explorer>`);
</script>
</body>
</html>
